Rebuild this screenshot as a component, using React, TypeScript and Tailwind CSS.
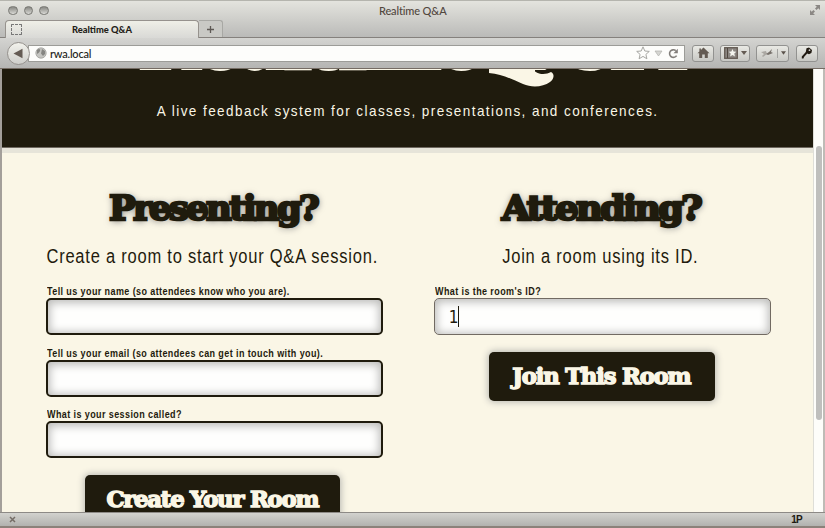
import type { ReactNode } from "react";

const slab = "font-['DejaVu_Serif',serif] font-bold whitespace-nowrap";
const gothic = "font-['Liberation_Sans',sans-serif] whitespace-nowrap";
const toolButton =
  "h-[17px] shrink-0 rounded-[3px] border border-[#929290] bg-gradient-to-b from-[#e9e9e4] to-[#c8c8c4] flex items-center justify-center";

function TitleBar() {
  return (
    <div className="relative flex h-[20px] shrink-0 items-center border-t border-[#b5b5ae] pl-[8px]">
      <div className="flex gap-[6px]">
        {[0, 1, 2].map((n) => (
          <span
            key={n}
            className="size-[9.5px] rounded-full border border-[#777772] bg-gradient-to-b from-[#888883] to-[#d9d9d5]"
          />
        ))}
      </div>
      <span className="absolute left-[379px] top-[2px] font-['Lato',sans-serif] text-[11px] leading-[15px] tracking-[-0.15px] font-medium text-[#51473e] whitespace-nowrap">
        Realtime Q&amp;A
      </span>
      <svg className="absolute left-[809px] top-[3px]" width="12" height="12" viewBox="0 0 12 12" fill="#8b8884">
        <path d="M6 1h5v5L9.3 4.3 7.5 6 6 4.5l1.8-1.8zM1 6l1.7 1.7L4.5 6 6 7.5 4.2 9.3 6 11H1z" />
      </svg>
    </div>
  );
}

function TabStrip() {
  return (
    <div className="flex h-[18px] shrink-0 items-end border-b border-[#85817d] pl-[5px]">
      <div className="-mb-px flex h-[18px] w-[194px] items-center rounded-t-[4px] border-x border-t border-[#96928d] border-b-0 bg-gradient-to-b from-[#efefe7] to-[#d9d9d6]">
        <span className="ml-[5px] size-[11px] rounded-[1px] border border-dashed border-[#777]" />
        <span className="ml-[50px] font-['Lato',sans-serif] text-[9.300px] font-black leading-[14px] text-[#241e19] whitespace-nowrap">
          Realtime Q&amp;A
        </span>
      </div>
      <div className="flex h-[17px] w-[24px] items-center justify-center rounded-tr-[3px] border-r border-t border-[#a8a8a4] bg-[#c9c9c5]">
        <svg width="9" height="9" viewBox="0 0 9 9" stroke="#5e5955" strokeWidth="1.3">
          <path d="M4.5 1v7M1 4.5h7" />
        </svg>
      </div>
    </div>
  );
}

function Toolbar() {
  return (
    <div className="flex h-[31px] shrink-0 items-center border-b border-[#756c64] bg-gradient-to-b from-[#d4d4d1] to-[#b5b5b3] pl-[7px]">
      <div className="z-10 flex size-[23px] shrink-0 items-center justify-center rounded-full border border-[#96928e] bg-gradient-to-b from-[#f2f2ec] to-[#cfcfcb]">
        <svg width="11" height="11" viewBox="0 0 11 11" fill="#645b53">
          <path d="M0.5 5.5 9.5 0.7v9.6z" />
        </svg>
      </div>
      <div className="-ml-[2px] flex h-[17px] w-[657px] shrink-0 items-center border border-[#9c9c98] bg-[#fdfdfb] pl-[6px] pr-[5px]">
        <svg width="12" height="12" viewBox="0 0 12 12">
          <circle cx="6" cy="6" r="5.2" fill="#c4c4c0" stroke="#969692" strokeWidth="0.7" />
          <path d="M2 3c2-2 4-1 3 1S3 6 2 7zM7 2l3 2v3L8 9 6 6.500z" fill="#858581" />
        </svg>
        <span className="ml-[3px] font-['Lato',sans-serif] text-[11px] leading-[15px] tracking-[-0.2px] font-medium text-[#211b16]">rwa.local</span>
        <span className="flex-1" />
        <svg width="14" height="14" viewBox="0 0 14 14" fill="#fdfdfb" stroke="#a7a7a3" strokeWidth="1">
          <path d="M7 .8 8.8 5l4.500.4-3.400 3 1 4.400L7 10.400l-3.900 2.400 1-4.400-3.400-3L5.200 5z" />
        </svg>
        <svg className="ml-[4px]" width="9" height="7" viewBox="0 0 9 7" fill="#d6d6d2" stroke="#b0b0ac" strokeWidth=".7">
          <path d="M1 1h7L4.500 6z" />
        </svg>
        <svg className="ml-[5px]" width="11" height="11" viewBox="0 0 11 11" fill="none" stroke="#827e7a" strokeWidth="1.6">
          <path d="M8.600 7.600A3.800 3.800 0 1 1 7.800 2.700" />
          <path d="M9.800.8v4.500H5.500z" fill="#827e7a" stroke="none" />
        </svg>
      </div>
      <div className={`${toolButton} ml-[7px] w-[22px]`}>
        <svg width="13" height="12" viewBox="0 0 13 12" fill="#645b53">
          <path d="M6.500.5 12.500 6.300h-1.700V11H7.800V7.500H5.200V11H2.200V6.300H.5L2.400 4.500V1.500h1.500v1.500z" />
        </svg>
      </div>
      <div className={`${toolButton} ml-[6px] w-[30px] gap-[3px]`}>
        <svg width="14" height="12" viewBox="0 0 14 12">
          <rect x=".7" y=".7" width="12.600" height="10.600" fill="#8b8681" stroke="#645b53" strokeWidth="1.300" />
          <path d="M3.500 1v10" stroke="#514840" />
          <path d="m8.500 2 1.100 2.500 2.700.2-2 1.900.6 2.800-2.400-1.500-2.400 1.500.6-2.800-2-1.900 2.700-.2z" fill="#f5f5ef" />
        </svg>
        <svg width="6" height="4" viewBox="0 0 6 4" fill="#645b53"><path d="M0 0h6L3 4z" /></svg>
      </div>
      <div className={`${toolButton} ml-[6px] w-[33px] gap-[3px]`}>
        <svg width="14" height="11" viewBox="0 0 14 11">
          <path d="M1 4l5-1 1 3-4 3-1-1 2-2z" fill="#aaa7a2" />
          <path d="M6 6l3-2 3-3-1 3 2 1-5 2z" fill="#77716b" />
        </svg>
        <span className="h-[9px] w-px bg-[#a3a3a0]" />
        <svg width="5" height="4" viewBox="0 0 6 4" fill="#5b534c"><path d="M0 0h6L3 4z" /></svg>
      </div>
      <div className={`${toolButton} ml-[7px] w-[22px]`}>
        <svg width="12" height="12" viewBox="0 0 12 12" fill="#211a12">
          <path d="M5.500 1.200 8 .5l3 2.500-.6 3L8 7.200 6.200 6.500 3 10 2.500 11.400H.8v-2l4-4.300z" />
          <circle cx="8.500" cy="3.200" r=".9" fill="#d2d2cc" />
        </svg>
      </div>
    </div>
  );
}

function Field({ label, value, focused }: { label: string; value?: string; focused?: boolean }) {
  return (
    <label className="block h-[61.500px] pt-px">
      <span className={`${gothic} ml-[1px] block h-[12px] origin-left scale-x-[0.9] text-[10px] font-bold leading-[12px] tracking-[0.45px] text-[#1f1b0d]`}>
        {label}
      </span>
      <span
        className={`flex h-[37px] w-[337px] items-center rounded-[5px] bg-[#fefefd] pl-[12px] shadow-[inset_0_1px_9px_2px_#bcbcba] ${
          focused ? "border-[1.500px] border-[#716a62]" : "border-2 border-[#1f1b0d]"
        }`}
      >
        {value && (
          <>
            <span className="origin-right scale-x-[0.85] font-['DejaVu_Sans',sans-serif] text-[18px] leading-[20px] text-[#1f1b0d]">{value}</span>
            <span className="h-[21px] w-px bg-[#1f1b0d]" />
          </>
        )}
      </span>
    </label>
  );
}

function Heading({ children, stretch }: { children: ReactNode; stretch: string }) {
  return (
    <h2 className="flex h-[44px] justify-center">
      <span className={`${slab} ${stretch} text-[34px] leading-[44px] tracking-[-2.500px] text-[#1f1b0d] [-webkit-text-stroke:2.500px_#1f1b0d] [text-shadow:0_1px_7px_#66666a]`}>
        {children}
      </span>
    </h2>
  );
}

function Subheading({ children }: { children: ReactNode }) {
  return (
    <p className="mt-[14px] flex h-[24px] -translate-x-[2.500px] justify-center">
      <span className={`${gothic} scale-x-[0.847] text-[19.500px] leading-[24px] tracking-[0.9px] text-[#1f1b0d]`}>{children}</span>
    </p>
  );
}

function SlabButton({ children, size }: { children: ReactNode; size: string }) {
  return (
    <button
      className={`mx-auto flex h-[49px] shrink-0 items-center justify-center rounded-[5px] bg-[#1f1b0d] shadow-[0_0_7px_1px_#b5b5b0] ${size}`}
    >
      <span className={`${slab} scale-x-[0.987] text-[23px] leading-[30px] tracking-[-1.200px] text-[#faf6e6] [-webkit-text-stroke:1.500px_#faf6e6]`}>
        {children}
      </span>
    </button>
  );
}

function Banner() {
  return (
    <header className="relative h-[79px] w-[811px] shrink-0 overflow-hidden border-b border-[#6f6960] bg-[#1f1b0d]">
      <h1 className={`${slab} absolute left-[136px] top-[-86px] origin-left scale-x-[0.83] text-[90px] leading-[106px] tracking-[-5px] text-[#faf6e6] [-webkit-text-stroke:4px_#faf6e6]`}>
        Realtime Q&amp;A
      </h1>
      <svg className="absolute left-[487px] top-0" width="70" height="20" viewBox="0 0 70 20">
        <path d="M46 1h24v19H46z" fill="#1f1b0d" />
        <path d="M0 0h44c3 6 13 6 18 3 4 2 3 7-1 10-7 5-18 6-27 2C22 10 13 5 0 4z" fill="#faf6e6" />
      </svg>
      <p className="flex h-[85px] items-center justify-center">
        <span className={`${gothic} scale-x-[0.9] text-[15px] tracking-[1.600px] text-[#faf6e6]`}>
          A live feedback system for classes, presentations, and conferences.
        </span>
      </p>
    </header>
  );
}

export default function App() {
  return (
    <div className="flex h-[528px] w-[825px] flex-col overflow-hidden bg-gradient-to-b from-[#e5e5df] via-[#b9b9b7] via-[38px] to-[#b9b9b7]">
      <TitleBar />
      <TabStrip />
      <Toolbar />
      <div className="flex h-[443px] shrink-0 border-l-2 border-r-2 border-l-[#a39f9a] border-r-[#bebbb6] bg-[#faf6e6]">
        <main className="flex h-full w-[811px] shrink-0 flex-col overflow-hidden bg-[#faf6e6]">
          <Banner />
          <div className="flex shrink-0 border-t-[5px] border-[#e6e4d9] pl-[44px]">
            <section className="w-[337px] shrink-0 pt-[33px]">
              <Heading stretch="-translate-x-px scale-x-[1.04]">Presenting?</Heading>
              <Subheading>Create a room to start your Q&amp;A session.</Subheading>
              <div className="mt-[17px]">
                <Field label="Tell us your name (so attendees know who you are)." />
                <Field label="Tell us your email (so attendees can get in touch with you)." />
                <Field label="What is your session called?" />
              </div>
              <SlabButton size="w-[255px] mt-[5px] translate-x-[-2px]">Create Your Room</SlabButton>
            </section>
            <section className="ml-[51px] w-[337px] shrink-0 pt-[33px]">
              <Heading stretch="-translate-x-[2px] scale-x-[1.08]">Attending?</Heading>
              <Subheading>Join a room using its ID.</Subheading>
              <div className="mt-[17px]">
                <Field label="What is the room's ID?" value="1" focused />
              </div>
              <SlabButton size="w-[226px] mt-[5px] translate-x-[-1px]">Join This Room</SlabButton>
            </section>
          </div>
        </main>
        <aside className="flex-1 border-l border-[#deded8] bg-[#fdfdfa] pl-[2px] pt-[77px]">
          <div className="h-[274px] w-[6px] rounded-full bg-[#bfbfbd]" />
        </aside>
      </div>
      <footer className="flex h-[16px] shrink-0 items-center justify-between border-b-2 border-t border-b-[#8b817a] border-t-[#8d8a86] bg-gradient-to-b from-[#d2d2ce] to-[#b2b2af] pl-[9px] pr-[23px]">
        <svg width="7" height="7" viewBox="0 0 7 7" stroke="#756d66" strokeWidth="1.500">
          <path d="m1 1 5 5M6 1 1 6" />
        </svg>
        <span className="font-['Liberation_Sans',sans-serif] text-[10px] font-bold leading-[12px] tracking-[-0.800px] text-[#211a12]">1P</span>
      </footer>
    </div>
  );
}
